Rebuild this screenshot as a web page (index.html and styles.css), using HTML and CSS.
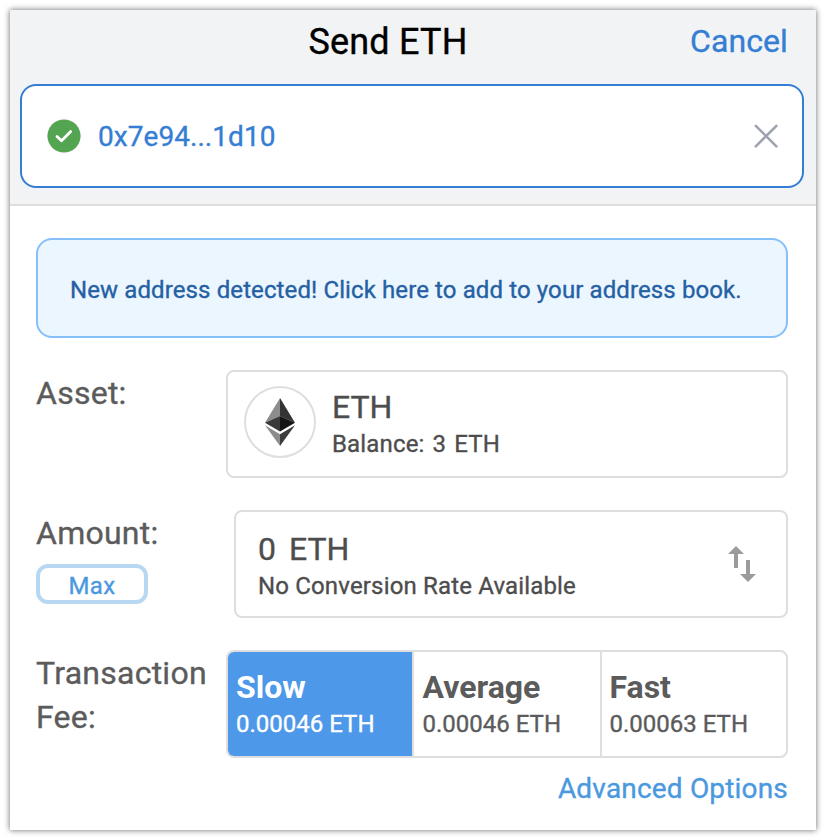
FILE: index.html
```html
<!DOCTYPE html>
<html lang="en">
<head>
<meta charset="utf-8">
<title>Send ETH</title>
<link rel="stylesheet" href="styles.css">
</head>
<body>
<main class="panel">
  <header class="header">
    <div class="title-bar">
      <h1 class="title">Send ETH</h1>
      <a class="cancel">Cancel</a>
    </div>
    <div class="recipient">
      <svg class="check" viewBox="0 0 34 34"><circle cx="17" cy="17" r="16.6" fill="#54a552"/><path d="M10 17.6l4.5 4.2L23.7 12.4" fill="none" stroke="#fff" stroke-width="2.8" stroke-linecap="round" stroke-linejoin="round"/></svg>
      <span class="address">0x7e94...1d10</span>
      <svg class="close" viewBox="0 0 24 24"><path d="M1.8 1.8l20.6 20.6M22.4 1.8L1.8 22.4" fill="none" stroke="#9fa3b0" stroke-width="2.6" stroke-linecap="round"/></svg>
    </div>
  </header>
  <section class="form">
    <div class="notice"><span class="notice-text">New address detected! Click here to add to your address book.</span></div>
    <div class="row">
      <div class="label"><span class="label-asset">Asset:</span></div>
      <div class="field asset">
        <div class="token">
          <svg class="eth" viewBox="0 0 30 48"><path d="M15 0L0 24.8 15 18z" fill="#8c8c8c"/><path d="M15 0l15 24.8L15 18z" fill="#343434"/><path d="M0 24.8L15 18v15.6z" fill="#393939"/><path d="M30 24.8L15 18v15.6z" fill="#141414"/><path d="M0 27.3l15 8.9V48z" fill="#8c8c8c"/><path d="M30 27.3l-15 8.9V48z" fill="#3c3c3b"/></svg>
        </div>
        <div class="stack">
          <div class="primary">ETH</div>
          <div class="secondary balance"><span>Balance:</span><span>3</span><span>ETH</span></div>
        </div>
      </div>
    </div>
    <div class="row">
      <div class="label"><span class="label-amount">Amount:</span><button class="max">Max</button></div>
      <div class="field amount">
        <div class="stack">
          <div class="primary quantity"><span>0</span><span>ETH</span></div>
          <div class="secondary conversion">No Conversion Rate Available</div>
        </div>
        <svg class="swap" viewBox="0 0 28 36"><path d="M8 0l8 8h-6v14H6V8H0zM18 14h4v14h6l-8 8-8-8h6z" fill="#9b9b9b"/></svg>
      </div>
    </div>
    <div class="row">
      <div class="label"><span class="label-fee">Transaction<br>Fee:</span></div>
      <div class="fees">
        <div class="fee selected"><b class="speed">Slow</b><span class="price">0.00046 ETH</span></div>
        <div class="fee"><b class="speed">Average</b><span class="price">0.00046 ETH</span></div>
        <div class="fee"><b class="speed">Fast</b><span class="price">0.00063 ETH</span></div>
      </div>
    </div>
    <a class="advanced">Advanced Options</a>
  </section>
</main>
</body>
</html>
```
FILE: styles.css
```css
* { box-sizing: border-box; }
body { margin: 0; padding: 10px; background: #fff; font-family: Roboto, sans-serif; color: #5b5b5b; -webkit-text-stroke: .35px currentColor; }
svg { display: block; flex: none; }
.panel { width: 806px; height: 820px; background: #fff; box-shadow: 0 0 6px rgba(0,0,0,.6); }
.header { height: 196px; padding: 0 12px 0 10px; background: #f2f3f5; border-bottom: 2px solid #dedede; }
.title-bar { display: grid; grid-template-columns: 1fr auto 1fr; height: 74px; align-items: start; padding: 0 16px; }
.title { grid-column: 2; margin: 0; padding-top: 10px; font-size: 36px; line-height: 44px; font-weight: 400; color: #000; letter-spacing: .2px; transform: translateX(-24px); }
.cancel { justify-self: end; padding-top: 11px; font-size: 32px; line-height: 40px; color: #347ed4; letter-spacing: .1px; }
.recipient { height: 104px; display: flex; align-items: center; padding: 0 24px 0 25px; border: 2px solid #347ed4; border-radius: 16px; background: #fff; }
.check { width: 34px; height: 34px; }
.address { margin-left: 17px; padding-top: 2px; flex: 1; font-size: 28px; line-height: 36px; color: #347ed4; letter-spacing: .05px; }
.close { width: 24px; height: 24px; }
.form { padding: 32px 28px 0 26px; }
.notice { height: 100px; display: flex; align-items: center; padding: 4px 32px 0; background: #ebf6ff; border: 2px solid #85c0f8; border-radius: 16px; font-size: 24px; line-height: 32px; letter-spacing: .11px; color: #2560a3; white-space: nowrap; }
.row { display: flex; margin-top: 32px; height: 108px; }
.label { width: 190px; flex: none; display: flex; flex-direction: column; align-items: flex-start; padding-top: 1px; font-size: 32px; line-height: 44px; letter-spacing: .25px; }
.field { flex: 1; display: flex; border: 2px solid #dedede; border-radius: 8px; color: #4d4d4d; }
.asset { padding: 14px 16px; }
.token { width: 72px; height: 72px; border: 2px solid #dedede; border-radius: 50%; display: flex; align-items: center; justify-content: center; }
.eth { width: 30px; height: 48px; }
.stack { flex: 1; }
.asset .stack { padding: 2px 0 0 16px; }
.primary { font-size: 32px; line-height: 38px; }
.secondary { font-size: 24px; line-height: 36px; letter-spacing: .16px; white-space: nowrap; }
.balance { display: flex; gap: 8px; }
.amount { margin-left: 8px; padding: 18px 30px 0 22px; }
.quantity { display: flex; gap: 13px; }
.swap { width: 28px; height: 36px; margin-top: 16px; }
.max { width: 112px; height: 40px; margin: 9px 0 0; padding: 4px 0 0; border: 4px solid #b7d7f2; border-radius: 12px; background: #fff; font: 24px/28px Roboto, sans-serif; color: #4a99df; letter-spacing: .4px; -webkit-text-stroke: .35px currentColor; }
.fees { flex: 1; display: grid; grid-template-columns: 184px 188px 1fr; border: 2px solid #dedede; border-radius: 8px; overflow: hidden; }
.fee { padding: 16px 0 0 8px; border-left: 2px solid #dedede; white-space: nowrap; }
.fee + .fee { padding-left: 8.5px; }
.fee + .fee + .fee { padding-left: 7.5px; }
.fee.selected { border-left: 0; background: #4d98e9; color: #fff; }
.speed { display: block; font-size: 32px; line-height: 38px; -webkit-text-stroke: 0; }
.price { display: block; font-size: 24px; line-height: 36px; }
.advanced { display: block; margin-top: 13px; text-align: right; font-size: 28px; line-height: 36px; letter-spacing: .18px; color: #4a99df; }
```
